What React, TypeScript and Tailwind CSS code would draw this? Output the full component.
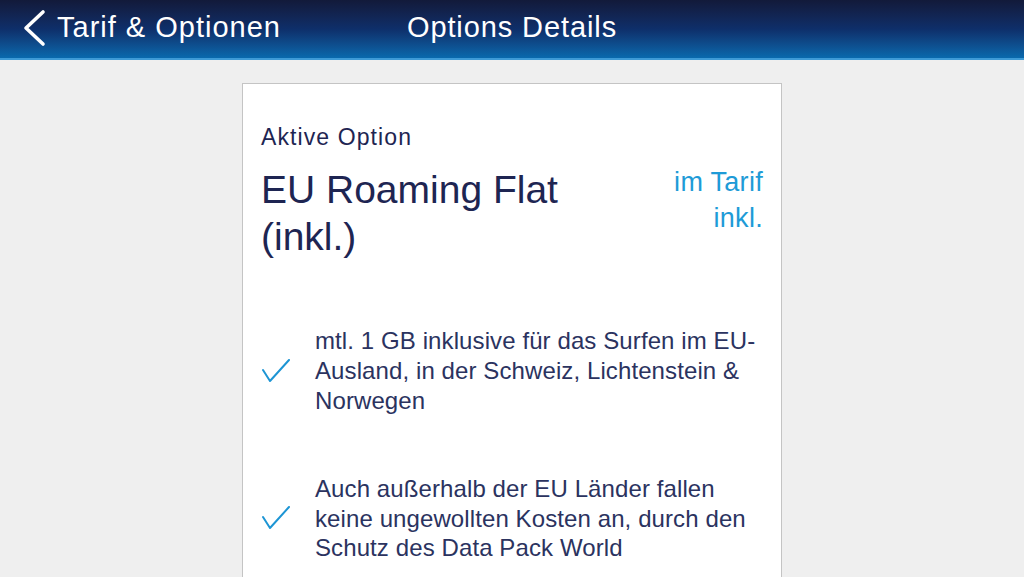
import React from "react";

function Check() {
  return (
    <svg width="30" height="24" viewBox="0 0 30 24" fill="none">
      <path d="M2 11 L9 22 L28 1" stroke="#1d95d4" strokeWidth="2" strokeLinecap="round" strokeLinejoin="round" />
    </svg>
  );
}

export default function App() {
  return (
    <div className="w-[1024px] h-[577px] overflow-hidden bg-[#efefef]" style={{ fontFamily: '"Liberation Sans", Arial, sans-serif' }}>
      <header className="relative h-[60px] bg-gradient-to-b from-[#121a3a] via-[#0e2f6a] to-[#0969ad] border-b-2 border-[#3e9ad6] flex items-center pb-[3px]">
        <div className="flex items-center pl-[21px] text-white">
          <svg width="26" height="38" viewBox="0 0 26 38" fill="none">
            <path d="M22 3 L5 19 L22 35" stroke="white" strokeWidth="3.6" strokeLinecap="round" strokeLinejoin="round" />
          </svg>
          <span className="ml-[10px] text-[29px] leading-none tracking-[1px]">Tarif &amp; Optionen</span>
        </div>
        <div className="absolute left-0 right-0 top-0 bottom-[3px] flex items-center justify-center pointer-events-none">
          <span className="text-white text-[29px] leading-none tracking-[0.9px]">Options Details</span>
        </div>
      </header>
      <div className="flex justify-center pt-[23px]">
        <div className="w-[540px] h-[520px] bg-white border border-[#c4c4c4] pl-[18px] pr-[18px] pt-[40px] text-[#1e2552]">
          <div className="text-[23px] leading-[26px] tracking-[1.1px]">Aktive Option</div>
          <div className="flex justify-between mt-[16px]">
            <div className="text-[39px] leading-[47px]">EU Roaming Flat<br />(inkl.)</div>
            <div className="text-[27px] leading-[36px] text-right text-[#1e9bd7] mt-[-2px] tracking-[0.3px]">im Tarif<br />inkl.</div>
          </div>
          <div className="flex items-center mt-[66px]">
            <div className="w-[54px] shrink-0 flex items-center"><Check /></div>
            <div className="text-[24px] leading-[30px] tracking-[0.1px] text-[#2b335f]">mtl. 1 GB inklusive für das Surfen im EU-<br />Ausland, in der Schweiz, Lichtenstein &amp;<br />Norwegen</div>
          </div>
          <div className="flex items-center mt-[58px]">
            <div className="w-[54px] shrink-0 flex items-center"><Check /></div>
            <div className="text-[24px] leading-[29.5px] tracking-[0.1px] text-[#2b335f]">Auch außerhalb der EU Länder fallen<br />keine ungewollten Kosten an, durch den<br />Schutz des Data Pack World</div>
          </div>
        </div>
      </div>
    </div>
  );
}
